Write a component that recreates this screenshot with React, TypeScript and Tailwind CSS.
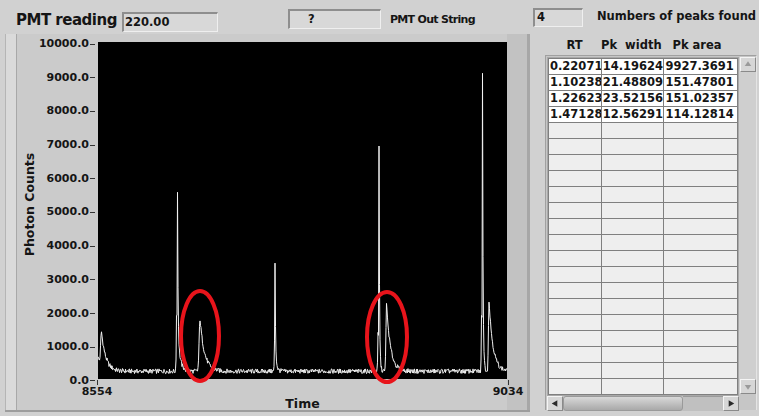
import React from 'react';

// plot geometry (pixels)
const W = 409;
const H = 337;
const yOf = (c: number) => H - (c * H) / 10000;

type Peak = { x: number; a: number; r: number; d: number };

const peaks: Peak[] = [
  { x: 3.5, a: 1030, r: 1.2, d: 4.5 },
  { x: 78.5, a: 1700, r: 0.4, d: 2.5 },
  { x: 79.5, a: 4230, r: 0.3, d: 0.5 },
  { x: 102, a: 1550, r: 1.2, d: 4.5 },
  { x: 176.5, a: 700, r: 0.4, d: 1.5 },
  { x: 177, a: 2670, r: 0.3, d: 0.5 },
  { x: 280, a: 1100, r: 0.4, d: 1 },
  { x: 281, a: 6250, r: 0.3, d: 0.5 },
  { x: 288.5, a: 2000, r: 0.8, d: 4 },
  { x: 383.5, a: 1600, r: 0.4, d: 1.2 },
  { x: 384.5, a: 8175, r: 0.3, d: 0.5 },
  { x: 391, a: 2100, r: 0.8, d: 4 },
];

const noise = (i: number) => {
  const s = Math.sin(i * 12.9898 + 78.233) * 43758.5453;
  return s - Math.floor(s);
};

const buildTrace = () => {
  const pts: string[] = [];
  for (let i = 0; i <= W * 2; i++) {
    const x = i / 2;
    let c = 230 + (noise(i) - 0.5) * 140 + 450 * Math.exp(-x / 3);
    for (const p of peaks) {
      const dx = x - p.x;
      c += dx < 0 ? p.a * Math.exp(-((dx / p.r) ** 2)) : p.a * Math.exp(-dx / p.d);
    }
    pts.push(`${x.toFixed(1)},${yOf(c).toFixed(1)}`);
  }
  return pts.join(' ');
};

const trace = buildTrace();

const yLabels = ['10000.0', '9000.0', '8000.0', '7000.0', '6000.0', '5000.0', '4000.0', '3000.0', '2000.0', '1000.0', '0.0'];

const rows = [
  ['0.22071', '14.19624', '9927.3691'],
  ['1.10238', '21.48809', '151.47801'],
  ['1.22623', '23.52156', '151.02357'],
  ['1.47128', '12.56291', '114.12814'],
];

const Arrow = ({ dir }: { dir: 'up' | 'down' | 'left' | 'right' }) => {
  const d = {
    up: 'M4 9 L7.5 4 L11 9 Z',
    down: 'M4 6 L7.5 11 L11 6 Z',
    left: 'M10 4 L4 7.5 L10 11 Z',
    right: 'M5 4 L11 7.5 L5 11 Z',
  }[dir];
  return (
    <div className="w-[16px] h-[15px] bg-[#d6d6d6] border-t border-l border-[#f4f4f4] border-r-[#8a8a8a] border-b-[#8a8a8a] border-r border-b flex items-center justify-center">
      <svg width="15" height="15" viewBox="0 0 15 15">
        <path d={d} fill={dir === 'up' || dir === 'down' ? '#9a9a9a' : '#2a2a2a'} />
      </svg>
    </div>
  );
};

const Chart = () => (
  <div className="ml-[5px] w-[525px] h-[378px] bg-[#cbcbcb] flex border-b-2 border-[#9d9d9d]">
    {/* left bevel strip */}
    <div className="w-[12px] h-full bg-[#dadada] border-l border-[#b5b5b5] border-r border-r-[#a8a8a8]" />

    {/* y title */}
    <div className="w-[25px] h-full flex items-center justify-center pt-[4px] pb-[40px]">
      <span className="block -rotate-90 whitespace-nowrap text-[12.5px] leading-[13px]">Photon Counts</span>
    </div>

    {/* y labels */}
    <div className="w-[56px] pt-[3px]">
      <div className="h-[351px] flex flex-col justify-between items-end">
        {yLabels.map((l) => (
          <div key={l} className="flex items-center h-[14px] text-[11px] leading-[14px]">
            <span>{l}</span>
            <span className="ml-[1px] w-[5px] h-[1px] bg-[#333]" />
            <span className="w-[3px]" />
          </div>
        ))}
      </div>
    </div>

    {/* plot + x axis */}
    <div className="w-[409px] flex flex-col relative z-10">
      <div className="h-[10px]" />
      <div className="w-[409px] h-[337px] bg-black">
        <svg width={W} height={H} className="overflow-visible block">
          <polyline points={trace} fill="none" stroke="#f2f2f2" strokeWidth="1" />
          <ellipse cx="102" cy="294" rx="19" ry="45" fill="none" stroke="#e8141b" strokeWidth="4" />
          <ellipse cx="289" cy="295" rx="20" ry="45" fill="none" stroke="#e8141b" strokeWidth="4" />
        </svg>
      </div>
      <div className="flex justify-between mx-[-18px] h-[20px]">
        {['8554', '9034'].map((t) => (
          <div key={t} className="w-[34px] flex flex-col items-center">
            <span className="w-[1px] h-[5px] bg-[#333] mt-[1px]" />
            <span className="text-[11px] leading-[12px] mt-[1px]">{t}</span>
          </div>
        ))}
      </div>
      <div className="text-center text-[12.5px] leading-[12px]">Time</div>
    </div>

    {/* right bevel */}
    <div className="w-[23px] h-full bg-[#c2c2c2] border-r-[3px] border-[#a7a7a7]" />
  </div>
);

const Table = () => (
  <div className="ml-[15px] w-[212px] flex flex-col">
    <div className="h-[21px] flex items-center pl-[3px] text-[11.5px] leading-[12px]">
      <span className="w-[53px] text-center">RT</span>
      <span className="w-[59px] text-center whitespace-pre">Pk  width</span>
      <span className="w-[74px] text-center">Pk area</span>
    </div>
    <div className="h-[355px] bg-[#c6c6c6] border-l border-t border-[#a0a0a0] border-r border-r-[#e4e4e4] pl-[1px] pt-[1px] flex flex-col">
      <div className="flex">
        <div className="w-[192px] bg-[#7f7f7f] flex flex-col gap-[1px] p-[1px] border border-[#a8a8a8]">
          {Array.from({ length: 21 }).map((_, r) => (
            <div key={r} className="flex gap-[1px] h-[15px]">
              {[52, 62, 73].map((w, c) => (
                <div
                  key={c}
                  style={{ width: w }}
                  className={`h-[15px] overflow-hidden whitespace-nowrap text-[11.5px] leading-[15px] pl-[1px] ${
                    rows[r] ? 'bg-white' : 'bg-[#eeeeee]'
                  }`}
                >
                  {rows[r]?.[c]}
                </div>
              ))}
            </div>
          ))}
        </div>
        {/* vertical scrollbar */}
        <div className="w-[17px] h-[337px] bg-[#cfcfcf] flex flex-col justify-between pl-[1px]">
          <Arrow dir="up" />
          <Arrow dir="down" />
        </div>
      </div>
      {/* horizontal scrollbar */}
      <div className="w-[192px] h-[16px] flex bg-[#c3c3c3]">
        <Arrow dir="left" />
        <div className="w-[120px] h-[15px] rounded-[3px] bg-gradient-to-b from-[#d9d9d9] to-[#a9a9a9] border border-[#9a9a9a]" />
        <div className="flex-1 bg-[#c0c0c0] border-t border-[#9a9a9a]" />
        <Arrow dir="right" />
      </div>
    </div>
  </div>
);

const box =
  'bg-[#d8d8d8] border-t-2 border-l-2 border-[#8e8e8e] border-r border-b border-r-[#efefef] border-b-[#efefef]';

export default function App() {
  return (
    <div className="w-[759px] h-[416px] bg-[#d1d1d1] overflow-hidden font-['DejaVu_Sans',sans-serif] font-bold text-[#151515]">
      {/* top bar */}
      <div className="h-[34px] flex items-start">
        <span className="ml-[16px] mt-[11px] text-[15px] leading-[18px] tracking-[-0.5px] w-[106px] whitespace-nowrap">
          PMT reading
        </span>
        <div className={`mt-[12px] w-[96px] h-[20px] ${box} text-[11.5px] leading-[17px] pl-[1px]`}>220.00</div>
        <div className={`ml-[70px] mt-[9px] w-[93px] h-[20px] ${box} text-[11.5px] leading-[16px] pl-[18px]`}>?</div>
        <span className="ml-[9px] mt-[13px] text-[11px] leading-[13px] tracking-[-0.7px] w-[143px] whitespace-nowrap">
          PMT Out String
        </span>
        <div className={`mt-[8px] w-[50px] h-[19px] ${box} text-[11.5px] leading-[15px] pl-[2px]`}>4</div>
        <span className="ml-[14px] mt-[10px] text-[11.5px] leading-[13px] whitespace-nowrap">
          Numbers of peaks found
        </span>
      </div>
      <div className="flex">
        <Chart />
        <Table />
      </div>
    </div>
  );
}
